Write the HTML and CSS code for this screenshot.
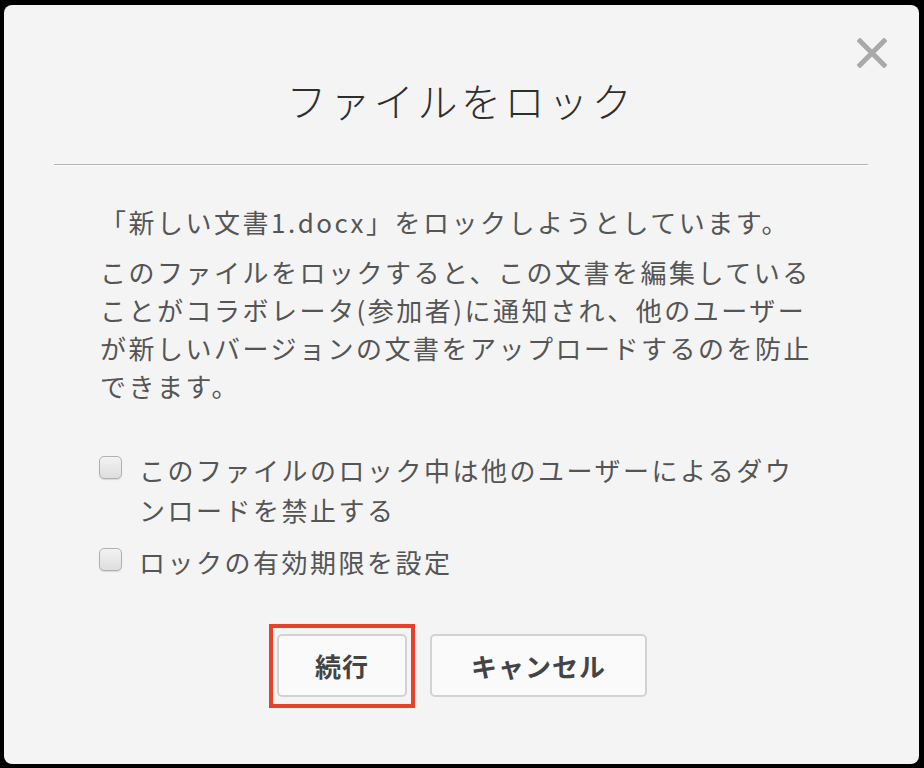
FILE: index.html
```html
<!DOCTYPE html>
<html lang="ja">
<head>
<meta charset="utf-8">
<title>ファイルをロック</title>
<link rel="stylesheet" href="styles.css">
</head>
<body>
<div class="dialog">
  <button class="close" aria-label="閉じる">
    <svg viewBox="0 0 30 30" width="30" height="30"><path d="M3 3 L27 27 M27 3 L3 27" stroke="#a9a9a9" stroke-width="5" stroke-linecap="square" fill="none"/></svg>
  </button>
  <div class="header"><h1 class="title">ファイルをロック</h1></div>
  <div class="body">
    <p class="lead">「新しい文書1.docx」をロックしようとしています。</p>
    <p class="desc">このファイルをロックすると、この文書を編集していることがコラボレータ(参加者)に通知され、他のユーザーが新しいバージョンの文書をアップロードするのを防止できます。</p>
    <div class="options">
      <label class="option"><input type="checkbox" class="check"><span class="label-text">このファイルのロック中は他のユーザーによるダウンロードを禁止する</span></label>
      <label class="option"><input type="checkbox" class="check"><span class="label-text">ロックの有効期限を設定</span></label>
    </div>
    <div class="actions">
      <button class="btn btn-primary">続行</button>
      <button class="btn btn-cancel">キャンセル</button>
    </div>
  </div>
</div>
</body>
</html>
```

FILE: styles.css
```css
html, body {
  margin: 0;
  padding: 0;
  background: #000;
}
body {
  width: 924px;
  height: 768px;
  overflow: hidden;
  font-family: "Noto Sans CJK JP", "Noto Sans", sans-serif;
}
.dialog {
  position: relative;
  margin: 5px 5px 0 4px;
  height: 759px;
  box-sizing: border-box;
  background: #f4f4f4;
  border-radius: 8px;
  padding: 0 51px 0 50px;
}
.close {
  position: absolute;
  top: 33px;
  right: 32px;
  width: 30px;
  height: 30px;
  padding: 0;
  border: 0;
  background: none;
  filter: blur(0.6px);
}
.close svg { display: block; }
.header {
  padding: 65px 0 34px;
  border-bottom: 1px solid #b4b4b4;
  box-shadow: 0 1px 0 #fcfcfc;
}
.title {
  margin: 0;
  text-align: center;
  font-size: 40px;
  line-height: 60px;
  font-weight: 300;
  letter-spacing: 3.6px;
  color: #2e2e2e;
}
.body {
  padding: 0 48px 0 46px;
  color: #555;
  font-size: 26px;
  letter-spacing: 2.5px;
}
.lead {
  margin: 38px 0 0;
  line-height: 38px;
}
.desc {
  margin: 12px 0 0;
  line-height: 38px;
}
.options {
  margin-top: 45px;
  display: flex;
  flex-direction: column;
  gap: 12px;
}
.option {
  display: flex;
  align-items: flex-start;
  gap: 17px;
  line-height: 40px;
}
.check {
  appearance: none;
  -webkit-appearance: none;
  flex: none;
  width: 23px;
  height: 23px;
  margin: 6px 0 0 -1px;
  border: 1px solid #b0b0b0;
  border-radius: 5px;
  background: linear-gradient(#f2f2f2, #dedede);
  box-shadow: 0 1px 1px rgba(0,0,0,0.12);
  box-sizing: border-box;
}
.actions {
  margin-top: 52px;
  display: flex;
  justify-content: center;
  gap: 23px;
  padding-left: 4px;
}
.btn {
  position: relative;
  height: 63px;
  padding: 0 36px;
  border: 2px solid #d2d2d2;
  border-radius: 5px;
  background: #fafafa;
  font-family: "Noto Sans CJK JP", "Noto Sans", sans-serif;
  font-size: 26px;
  font-weight: 700;
  letter-spacing: 1px;
  color: #444;
}
.btn-cancel {
  padding: 0 39px;
}
.btn-primary::after {
  content: "";
  position: absolute;
  top: -12px;
  bottom: -13px;
  left: -10px;
  right: -10px;
  border: 4px solid #e8402a;
  pointer-events: none;
}
```
